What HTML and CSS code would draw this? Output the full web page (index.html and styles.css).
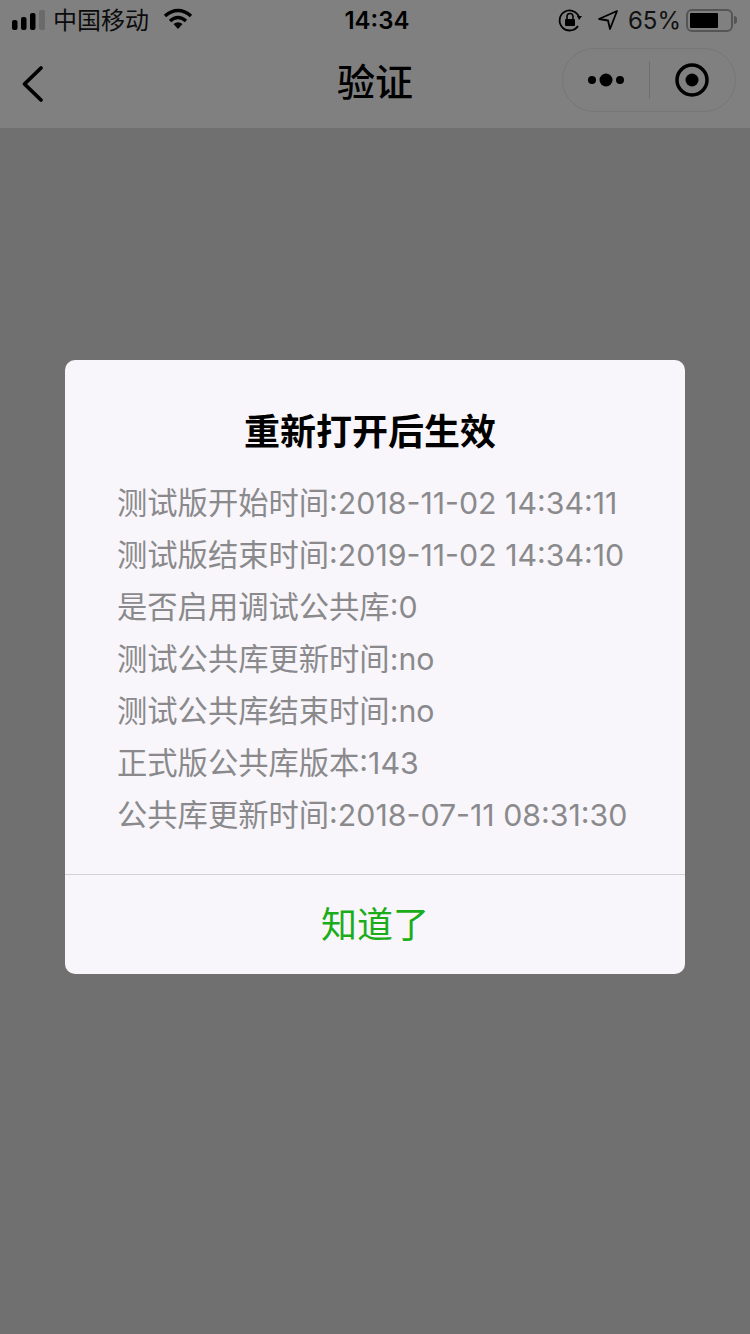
FILE: index.html
```html
<!DOCTYPE html>
<html>
  <head>
    <meta charset="UTF-8" />
    <title>验证</title>
    <link rel="stylesheet" href="styles.css">
  </head>
  <body>
    <div class="top">
      <div class="status">
        <div class="status-left">
          <svg class="signal" width="33" height="20" viewBox="0 0 33 20">
            <rect x="0" y="10" width="5.500" height="10" rx="2" fill="#000" />
            <rect x="9" y="7" width="5.500" height="13" rx="2" fill="#000" />
            <rect x="18" y="3" width="5.500" height="17" rx="2" fill="#000" />
            <rect x="27" y="0" width="6" height="20" rx="2" fill="#6a6a6a" />
          </svg>
          <span class="carrier">中国移动</span>
          <svg class="wifi" width="30" height="22" viewBox="0 0 30 22">
            <path d="M2 8 Q15 -3 28 8" fill="none" stroke="#000" stroke-width="3.6" />
            <path d="M7 13 Q15 6 23 13" fill="none" stroke="#000" stroke-width="3.4" />
            <path d="M10.5 16 Q15 12.5 19.500 16 L15 21 Z" fill="#000" />
          </svg>
        </div>
        <div class="time">14:34</div>
        <div class="status-right">
          <svg class="lock" width="24" height="24" viewBox="0 0 24 24">
            <path d="M21 9 A10 10 0 1 0 20 18" fill="none" stroke="#000" stroke-width="1.8" />
            <path d="M19 8 L24 8 L21 12 Z" fill="#000" />
            <rect x="7" y="11" width="10" height="7" rx="1" fill="#000" />
            <path d="M9 11 V8.500 A3 3 0 0 1 15 8.500 V11" fill="none" stroke="#000" stroke-width="1.600" />
          </svg>
          <svg class="arrow" width="22" height="22" viewBox="0 0 22 22">
            <path d="M20 2 L2 10 L11 11.500 L13 20 Z" fill="none" stroke="#000" stroke-width="1.800" stroke-linejoin="round" />
          </svg>
          <span class="battery-text">65%</span>
          <div class="battery">
            <div class="battery-fill"></div>
          </div>
          <div class="battery-tip"></div>
        </div>
      </div>
      <div class="nav">
        <svg class="back" width="26" height="38" viewBox="0 0 26 38">
          <path d="M21 3 L4.500 19 L21 35" fill="none" stroke="#000" stroke-width="3.800" stroke-linecap="round" stroke-linejoin="round" />
        </svg>
        <div class="nav-title">验证</div>
        <div class="capsule">
          <div class="capsule-part">
            <svg width="38" height="14" viewBox="0 0 38 14">
              <circle cx="5" cy="7" r="4" fill="#000" />
              <circle cx="19" cy="7" r="6.500" fill="#000" />
              <circle cx="33" cy="7" r="4" fill="#000" />
            </svg>
          </div>
          <div class="capsule-line"></div>
          <div class="capsule-part">
            <svg width="36" height="36" viewBox="0 0 36 36">
              <circle cx="18" cy="18" r="15" fill="none" stroke="#000" stroke-width="3.500" />
              <circle cx="18" cy="18" r="6.500" fill="#000" />
            </svg>
          </div>
        </div>
      </div>
    </div>

    <div class="mask">
      <div class="dialog">
        <div class="dialog-body">
          <h2 class="dialog-title">重新打开后生效</h2>
          <p class="info">测试版开始时间:2018-11-02 14:34:11</p>
          <p class="info">测试版结束时间:2019-11-02 14:34:10</p>
          <p class="info">是否启用调试公共库:0</p>
          <p class="info">测试公共库更新时间:no</p>
          <p class="info">测试公共库结束时间:no</p>
          <p class="info">正式版公共库版本:143</p>
          <p class="info">公共库更新时间:2018-07-11 08:31:30</p>
        </div>
        <div class="dialog-btn">知道了</div>
      </div>
    </div>
  </body>
</html>
```

FILE: styles.css
```css
* {
  box-sizing: border-box;
}

html,
body {
  margin: 0;
  height: 100%;
}

body {
  background-color: #707070;
  font-family: Inter, "Noto Sans CJK SC", sans-serif;
  color: #000;
  overflow: hidden;
}

.top {
  background-color: #808080;
  height: 128px;
}

.status {
  height: 40px;
  padding: 0 13px 0 12px;
  display: grid;
  grid-template-columns: 1fr auto 1fr;
  align-items: center;
}

.status-left {
  display: flex;
  align-items: center;
}

.carrier {
  margin-left: 8px;
  padding-bottom: 4px;
  font-size: 24px;
  font-family: "Noto Sans CJK SC", sans-serif;
  color: #0c0c0c;
}

.wifi {
  margin-left: 14px;
  margin-bottom: 2px;
}

.time {
  margin-left: 5px;
  font-size: 24px;
  font-weight: 600;
}

.status-right {
  display: flex;
  align-items: center;
  justify-content: flex-end;
}

.arrow {
  margin-left: 15px;
}

.battery-text {
  margin-left: 9px;
  font-size: 24px;
  color: #111;
}

.battery {
  margin-left: 5px;
  width: 47px;
  height: 23px;
  border: 2px solid #555;
  border-radius: 6px;
  padding: 2px;
}

.battery-fill {
  width: 28px;
  height: 100%;
  background-color: #000;
  border-radius: 1px;
}

.battery-tip {
  margin-left: 1px;
  width: 3px;
  height: 8px;
  background-color: #555;
  border-radius: 0 3px 3px 0;
}

.nav {
  height: 88px;
  padding: 0 14px 0 20px;
  display: grid;
  grid-template-columns: 1fr auto 1fr;
  align-items: center;
}

.nav-title {
  margin-right: 6px;
  padding-bottom: 8px;
  font-size: 38px;
  font-weight: 500;
  font-family: "Noto Sans CJK SC", sans-serif;
  line-height: 50px;
}

.capsule {
  justify-self: end;
  align-self: start;
  margin-top: 8px;
  width: 174px;
  height: 64px;
  border: 1px solid #777;
  border-radius: 32px;
  display: flex;
  align-items: center;
}

.capsule-part {
  flex: 1;
  display: flex;
  justify-content: center;
  align-items: center;
}

.capsule-line {
  width: 1px;
  height: 38px;
  background-color: #6f6f6f;
}

.mask {
  position: fixed;
  top: 0;
  left: 0;
  right: 0;
  bottom: 0;
  display: flex;
  justify-content: center;
  align-items: center;
}

.dialog {
  width: 620px;
  height: 614px;
  background-color: #f8f6fa;
  border-radius: 10px;
  display: flex;
  flex-direction: column;
}

.dialog-body {
  flex: 1;
  padding: 42px 52px 0;
  border-bottom: 1px solid #d3d1d6;
}

.dialog-title {
  margin: 0 10px 21px 0;
  font-size: 36px;
  line-height: 54px;
  font-weight: 700;
  text-align: center;
  font-family: "Noto Sans CJK SC", sans-serif;
}

.info {
  margin: 0;
  font-size: 30.3px;
  line-height: 52px;
  color: #8a8a8d;
  white-space: nowrap;
}

.dialog-btn {
  height: 99px;
  padding-bottom: 6px;
  display: flex;
  justify-content: center;
  align-items: center;
  font-size: 36px;
  color: #1aad19;
}
```
